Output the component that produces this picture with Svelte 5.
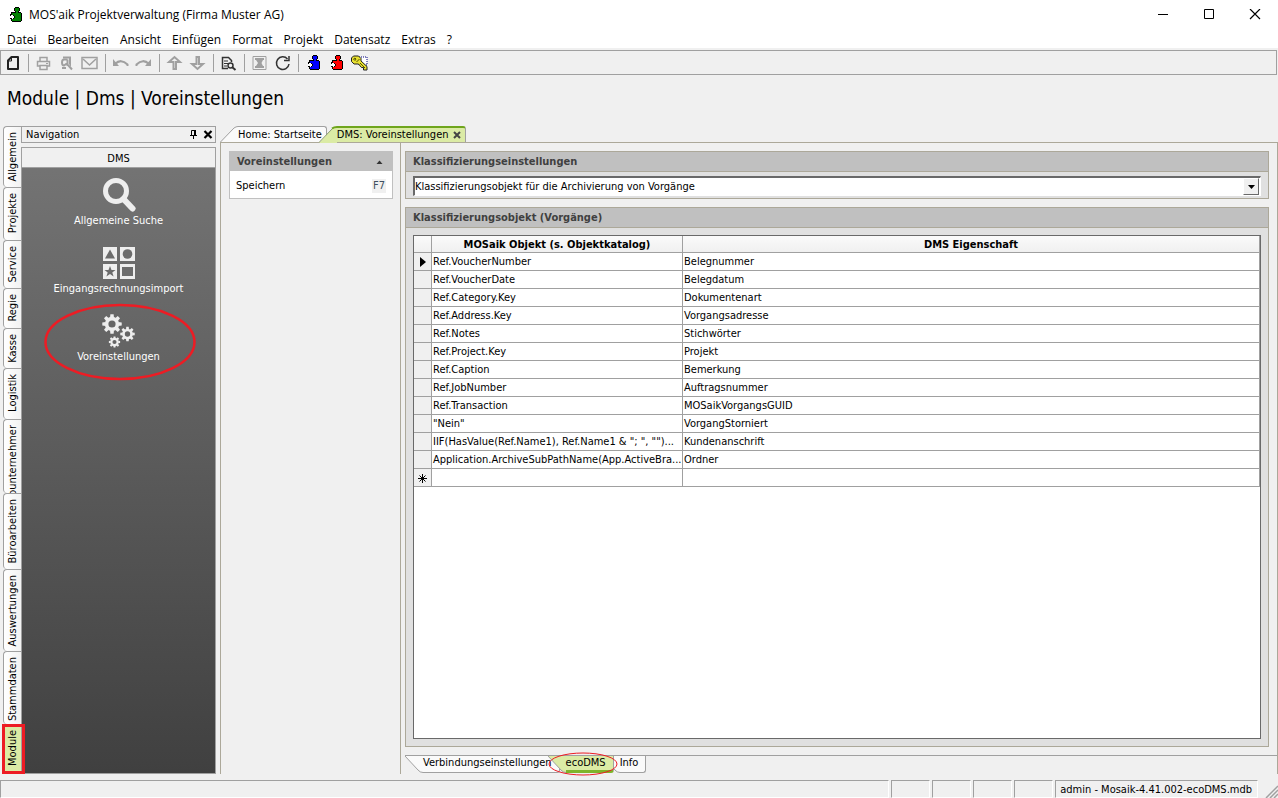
<script>
  const menu = ["Datei", "Bearbeiten", "Ansicht", "Einfügen", "Format", "Projekt", "Datensatz", "Extras", "?"];

  const tools = [
    ["Neu"],
    ["Drucken", "Seitenansicht", "Senden"],
    ["Rückgängig", "Wiederholen"],
    ["Nach oben", "Nach unten"],
    ["Suchen"],
    ["Excel", "Aktualisieren"],
    ["Modul blau", "Modul rot", "Schlüssel"],
  ];

  const sections = [
    "Allgemein", "Projekte", "Service", "Regie", "Kasse", "Logistik",
    "Subunternehmer", "Büroarbeiten", "Auswertungen", "Stammdaten", "Module",
  ];

  const rows = [
    ["Ref.VoucherNumber", "Belegnummer"],
    ["Ref.VoucherDate", "Belegdatum"],
    ["Ref.Category.Key", "Dokumentenart"],
    ["Ref.Address.Key", "Vorgangsadresse"],
    ["Ref.Notes", "Stichwörter"],
    ["Ref.Project.Key", "Projekt"],
    ["Ref.Caption", "Bemerkung"],
    ["Ref.JobNumber", "Auftragsnummer"],
    ["Ref.Transaction", "MOSaikVorgangsGUID"],
    ['"Nein"', "VorgangStorniert"],
    ['IIF(HasValue(Ref.Name1), Ref.Name1 & "; ", "")...', "Kundenanschrift"],
    ["Application.ArchiveSubPathName(App.ActiveBra...", "Ordner"],
  ];

  let section = $state("Module");
  let navItem = $state("Voreinstellungen");
  let page = $state("ecoDMS");
  let currentRow = $state(0);
</script>

{#snippet puzzle(color)}
  <svg width="14" height="16" viewBox="0 0 14 16" shape-rendering="crispEdges">
    <path d="M6 0H10V1H11V4H10V5H12V6H13V14H12V15H3V14H2V12H1V8H2V5H6V4H5V1H6Z" />
    <path d="M6 1H10V4H9V6H12V14H3V12H5V11H6V9H5V8H3V6H7V4H6Z" fill={color} />
    <path d="M1 8H4V9H5V11H4V12H1Z" fill="#fff" />
    <path d="M1 7H2V9H1ZM1 11H3V12H1Z" />
  </svg>
{/snippet}

{#snippet cog(x, y, r)}
  <g transform="translate({x} {y}) scale({r})">
    <circle r="6" fill="none" stroke="#eee" stroke-width="4" />
    {#each [0, 45, 90, 135, 180, 225, 270, 315] as a}
      <path d="M-2.2 -7L-1.8 -10.8H1.8L2.200 -7Z" fill="#eee" transform="rotate({a})" />
    {/each}
  </g>
{/snippet}

{#snippet toolIcon(name)}
  {#if name === "Modul blau"}
    {@render puzzle("#0000ff")}
  {:else if name === "Modul rot"}
    {@render puzzle("#ff0000")}
  {:else}
    <svg width="17" height="16" viewBox="0 0 17 16" fill="none">
      {#if name === "Neu"}
        <path d="M7.500 2H14V14H4V5.500Z" stroke="#222" stroke-width="2" stroke-linejoin="round" />
        <path d="M4 6H7.500V2" stroke="#222" />
      {:else if name === "Drucken"}
        <path d="M5 6V2.500H12V6M4.500 11H2.500V6.500H14.500V11H12.500M5 10.500H12V14.500H5Z" stroke="#a0a0a0" stroke-width="1.500" />
        <path d="M11 8.500H13" stroke="#a0a0a0" />
      {:else if name === "Seitenansicht"}
        <path d="M5 1.500H13V12L11 9V3.500H5Z" fill="#a0a0a0" />
        <path d="M9.500 4.500V11M9.500 4.500H6Q4 4.500 4 7.500T6 10.500L9.500 8" stroke="#a0a0a0" stroke-width="2" />
        <path d="M10 10L14 14.500M4 13H8" stroke="#a0a0a0" stroke-width="2" />
      {:else if name === "Senden"}
        <path d="M1 2.500H16V13.500H1Z" stroke="#a0a0a0" stroke-width="1.500" />
        <path d="M2 4L8.500 10L15 4" stroke="#a0a0a0" stroke-width="1.500" />
      {:else if name === "Rückgängig"}
        <path d="M3 9Q9 3 15.500 9.500V11" stroke="#a0a0a0" stroke-width="2" />
        <path d="M1 4V11H7Z" fill="#a0a0a0" />
      {:else if name === "Wiederholen"}
        <path d="M14 9Q8 3 1.500 9.500V11" stroke="#a0a0a0" stroke-width="2" />
        <path d="M16 4V11H10Z" fill="#a0a0a0" />
      {:else if name === "Nach oben"}
        <path d="M3 7L8.500 2L14 7H10V14H7.500V7Z" stroke="#a0a0a0" stroke-width="2" />
      {:else if name === "Nach unten"}
        <path d="M3 9L8.500 14L14 9H10V2H7.500V9Z" stroke="#a0a0a0" stroke-width="2" />
      {:else if name === "Suchen"}
        <path d="M8 13.500H2.500V2.500H8.500L11.500 5.500V7" stroke="#333" stroke-width="1.500" />
        <path d="M4 6H8M4 8.500H8M4 11H7" stroke="#333" />
        <circle cx="10.500" cy="10.500" r="2.500" stroke="#333" stroke-width="1.500" />
        <path d="M12 12L15.500 15" stroke="#333" stroke-width="2" />
      {:else if name === "Excel"}
        <path d="M2 1.500H15V14.500H2Z" stroke="#a0a0a0" />
        <path d="M4 3H13V5H12L10.500 8L12 11H13V13H4V11H5L7 8L5 5H4Z" fill="#a0a0a0" />
      {:else if name === "Aktualisieren"}
        <path d="M13.500 4A6.300 6.300 0 1 0 15 9" stroke="#333" stroke-width="1.500" />
        <path d="M15 1V5.500H10" stroke="#333" stroke-width="1.500" />
      {:else if name === "Schlüssel"}
        <path d="M8 2H16V10H8Z" fill="#fff" stroke="#000080" stroke-dasharray="1 1" />
        <path d="M2.500 1H7.500L10 3.500V6L16 11.500V15H12.500V12.500H10.500L7.500 9H3L.5 6.500V3Z" fill="#e8e030" stroke="#222" />
        <path d="M2.500 4L4 3L5 4L4 5.500ZM5.500 7L8.500 4M9 8L14 13" stroke="#555500" />
      {/if}
    </svg>
  {/if}
{/snippet}

<div class="window">
  <header class="titlebar">
    {@render puzzle("#008000")}
    <span class="title">MOS'aik Projektverwaltung (Firma Muster AG)</span>
    <button class="caption" aria-label="Minimieren">
      <svg width="12" height="12" viewBox="0 0 12 12"><path d="M1 5.500H11" stroke="#000" /></svg>
    </button>
    <button class="caption" aria-label="Maximieren">
      <svg width="12" height="12" viewBox="0 0 12 12"><path d="M1.500 .5H10.500V9.500H1.500Z" fill="none" stroke="#000" /></svg>
    </button>
    <button class="caption" aria-label="Schließen">
      <svg width="12" height="12" viewBox="0 0 12 12"><path d="M1 0L11 10M11 0L1 10" stroke="#000" stroke-width="1.200" /></svg>
    </button>
  </header>

  <nav class="menu">
    {#each menu as item}
      <button>{item}</button>
    {/each}
  </nav>

  <div class="toolbar">
    {#each tools as group}
      <div class="tool-group">
        {#each group as name}
          <button aria-label={name} title={name}>{@render toolIcon(name)}</button>
        {/each}
      </div>
    {/each}
  </div>

  <h1>Module | Dms | Voreinstellungen</h1>

  <div class="main">
    <div class="sections">
      {#each sections as name}
        <button class:active={section === name} onclick={() => (section = name)}>
          <span>{name}</span>
        </button>
      {/each}
    </div>

    <aside class="navigation">
      <div class="nav-title">
        <span>Navigation</span>
        <button aria-label="Anheften">
          <svg width="9" height="10" viewBox="0 0 9 10"><path d="M2.500 5V.5H6V5M1 5.500H8M4.500 6V9" fill="none" stroke="#000" /><path d="M5 0H7V5H5Z" /></svg>
        </button>
        <button aria-label="Navigation schließen">
          <svg width="10" height="10" viewBox="0 0 10 10"><path d="M1.500 1L8.500 8M8.500 1L1.500 8" stroke="#000" stroke-width="2.200" /></svg>
        </button>
      </div>
      <div class="nav-body">
        <h2>DMS</h2>
        <button class="nav-item" onclick={() => (navItem = "Allgemeine Suche")}>
          <svg width="34" height="34" viewBox="0 0 34 34" fill="none" stroke="#eee">
            <circle cx="14" cy="13" r="10.500" stroke-width="5" />
            <path d="M21.500 21L30.500 30.500" stroke-width="6" stroke-linecap="round" />
          </svg>
          Allgemeine Suche
        </button>
        <button class="nav-item" onclick={() => (navItem = "Eingangsrechnungsimport")}>
          <svg width="34" height="34" viewBox="0 0 34 34">
            <path d="M1 1H15V15H1ZM18 1H33V15H18ZM1 18H15V33H1ZM18 18H33V33H18Z" fill="#eee" />
            <path d="M8 3.500L13 12.500H3Z M20 21H31V30H20Z M8 20L9.500 24H13.500L10.300 26.500L11.600 30.500L8 28L4.400 30.500L5.700 26.500L2.500 24H6.500Z" fill="#6c6c6c" />
            <circle cx="25.500" cy="8" r="4.800" fill="#6c6c6c" />
          </svg>
          Eingangsrechnungsimport
        </button>
        <button class="nav-item" onclick={() => (navItem = "Voreinstellungen")}>
          <svg width="34" height="34" viewBox="0 0 34 34">
            {@render cog(10, 10, 0.9)}
            {@render cog(25.5, 20, 0.67)}
            {@render cog(12.5, 28, 0.52)}
          </svg>
          Voreinstellungen
          {#if navItem === "Voreinstellungen"}
            <svg class="ring nav-ring" width="152" height="78" viewBox="0 0 152 78">
              <ellipse cx="76" cy="39" rx="74.500" ry="37" />
            </svg>
          {/if}
        </button>
      </div>
    </aside>

    <section class="documents">
      <div class="doc-tabs">
        <button>
          <svg width="18" height="17" viewBox="0 0 18 17"><path d="M0 17L14 2Q16 .5 18 .5V17Z" fill="#fafafa" /><path d="M0 16.500L14 2Q16 .5 18 .5" fill="none" stroke="#a0a0a0" /></svg>
          <span>Home: Startseite</span>
        </button>
        <button class="active">
          <svg width="18" height="17" viewBox="0 0 18 17"><path d="M0 17L14 2Q16 .5 18 .5V17Z" fill="#dbeba5" /><path d="M0 16.500L14 2" stroke="#8a9a70" /><path d="M13 2.500Q15 1 18 1" fill="none" stroke="#6fa51c" stroke-width="2" /></svg>
          <span>
            DMS: Voreinstellungen
            <svg width="8" height="8" viewBox="0 0 8 8"><path d="M1 1L7 7M7 1L1 7" stroke="#444" stroke-width="2" /></svg>
          </span>
        </button>
      </div>

      <div class="doc-body">
        <div class="tasks">
          <div class="task-box">
            <h3>
              Voreinstellungen
              <svg width="7" height="4" viewBox="0 0 7 4"><path d="M.5 4L3.500 .5L6.500 4Z" fill="#333" /></svg>
            </h3>
            <button>Speichern <kbd>F7</kbd></button>
          </div>
        </div>

        <div class="content">
          <div class="groups">
            <div class="group">
              <h3><label for="klassifizierung">Klassifizierungseinstellungen</label></h3>
              <div class="select-wrap">
                <select id="klassifizierung">
                  <option>Klassifizierungsobjekt für die Archivierung von Vorgänge</option>
                </select>
                <span class="arrow">
                  <svg width="7" height="4" viewBox="0 0 7 4"><path d="M0 0H7L3.500 4Z" /></svg>
                </span>
              </div>
            </div>

            <div class="group fill">
              <h3>Klassifizierungsobjekt (Vorgänge)</h3>
              <div class="grid">
                <table>
                  <colgroup><col class="mark" /><col class="object" /><col /></colgroup>
                  <thead>
                    <tr><th></th><th>MOSaik Objekt (s. Objektkatalog)</th><th>DMS Eigenschaft</th></tr>
                  </thead>
                  <tbody>
                    {#each rows as [object, property], i}
                      <tr onclick={() => (currentRow = i)}>
                        <td>
                          {#if i === currentRow}
                            <svg width="6" height="10" viewBox="0 0 6 10"><path d="M0 0L6 5L0 10Z" /></svg>
                          {/if}
                        </td>
                        <td>{object}</td>
                        <td>{property}</td>
                      </tr>
                    {/each}
                    <tr>
                      <td>
                        <svg width="9" height="9" viewBox="0 0 9 9"><path d="M4.500 0V9M0 4.500H9M1.500 1.500L7.500 7.500M7.500 1.500L1.500 7.500" stroke="#000" /></svg>
                      </td>
                      <td></td>
                      <td></td>
                    </tr>
                  </tbody>
                </table>
              </div>
            </div>
          </div>

          <div class="page-tabs">
            {#each ["Verbindungseinstellungen", "ecoDMS", "Info"] as name}
              <button class:active={page === name} onclick={() => (page = name)}>
                <svg width="18" height="17" viewBox="0 0 18 17">
                  <path class="face" d="M0 0L13 14Q15 16.500 18 16.500V0Z" />
                  <path d="M0 0L13 14Q15 16.500 18 16.500" fill="none" stroke="#a0a0a0" />
                </svg>
                <span>{name}</span>
                {#if page === name && name === "ecoDMS"}
                  <svg class="ring page-ring" width="70" height="24" viewBox="0 0 70 24">
                    <ellipse cx="35" cy="12" rx="34" ry="11" />
                  </svg>
                {/if}
              </button>
            {/each}
          </div>
        </div>
      </div>
    </section>
  </div>

  <footer class="status">
    <span class="message"></span>
    <span></span>
    <span></span>
    <span></span>
    <span></span>
    <span class="database">admin - Mosaik-4.41.002-ecoDMS.mdb</span>
    <svg width="14" height="14" viewBox="0 0 14 14"><path d="M2 14L14 2M6 14L14 6M10 14L14 10" stroke="#a0a0a0" stroke-width="1.500" /></svg>
  </footer>
</div>

<style>
  :global(body) {
    margin: 0;
    background: #f0f0f0;
  }
  .window {
    display: flex;
    flex-direction: column;
    min-height: 100vh;
    overflow: hidden;
    background: #f0f0f0;
    color: #000;
    font-family: "DejaVu Sans Condensed", "DejaVu Sans", sans-serif;
    font-size: 11px;
    line-height: 14px;
  }
  button {
    margin: 0;
    padding: 0;
    border: none;
    background: none;
    color: inherit;
    font: inherit;
    white-space: nowrap;
  }
  svg {
    display: block;
    flex-shrink: 0;
  }
  h1,
  h2,
  h3 {
    margin: 0;
    font: inherit;
  }

  .titlebar,
  .menu {
    display: flex;
    align-items: center;
    background: #fff;
    font-family: "Open Sans", sans-serif;
    font-size: 12px;
    line-height: 16px;
  }
  .titlebar {
    height: 30px;
    padding-left: 9px;
  }
  .title {
    flex: 1;
    padding-left: 6px;
  }
  .caption {
    display: flex;
    justify-content: center;
    width: 46px;
  }
  .menu {
    height: 17px;
    gap: 11px;
    padding: 1px 7px 0;
  }
  .toolbar {
    display: flex;
    height: 23px;
    margin: 2px 1px 0 0;
    border: 1px solid #a0a0a0;
  }
  .tool-group {
    display: flex;
    align-items: center;
  }
  .tool-group + .tool-group::before {
    content: "";
    width: 1px;
    height: 18px;
    margin: 0 3px 0 4px;
    background: #a0a0a0;
  }
  .tool-group button {
    display: flex;
    justify-content: center;
    width: 23px;
  }
  h1 {
    padding: 11px 7px 16px;
    font-size: 19px;
    line-height: 24px;
  }

  .main {
    display: flex;
    flex: 1;
  }
  .sections {
    display: grid;
    grid-template-rows: 61fr 53fr 48fr 40fr 40fr 51fr 74fr 76fr 82fr 73fr 50fr;
    contain: size;
    width: 18px;
    margin-left: 3px;
  }
  .sections button {
    position: relative;
    display: flex;
    align-items: flex-start;
    justify-content: center;
    min-height: 0;
    padding: 5px 0 0 1px;
    overflow: hidden;
    border: 1px solid #a0a0a0;
    border-width: 1px 0 0 1px;
    border-radius: 4px 0 0 4px;
    background: linear-gradient(90deg, #fff, #f2f2f2);
  }
  .sections span {
    writing-mode: vertical-rl;
    transform: rotate(180deg);
  }
  .sections .active {
    overflow: visible;
    background: #dbeba5;
  }
  .sections .active::after {
    content: "";
    position: absolute;
    z-index: 1;
    inset: -1px -4px 0 -2px;
    border: 3px solid #ed1c24;
  }

  .navigation {
    display: flex;
    flex-direction: column;
    gap: 4px;
    width: 195px;
  }
  .nav-title {
    display: flex;
    align-items: center;
    gap: 5px;
    height: 15px;
    padding: 0 2px 0 4px;
    border: 1px solid #a0a0a0;
  }
  .nav-title span {
    flex: 1;
  }
  .nav-body {
    flex: 1;
    border: 1px solid #a0a0a0;
    background: linear-gradient(#757575, #404040);
  }
  h2 {
    height: 19px;
    margin-bottom: 10px;
    border-bottom: 1px solid #a0a0a0;
    background: #f0f0f0;
    line-height: 21px;
    text-align: center;
  }
  .nav-item {
    position: relative;
    display: flex;
    flex-direction: column;
    align-items: center;
    gap: 2px;
    width: 100%;
    height: 68px;
    color: #fff;
  }
  .ring {
    position: absolute;
    fill: none;
    stroke: #ed1c24;
    pointer-events: none;
  }
  .nav-ring {
    top: -11px;
    left: 22px;
    stroke-width: 2.5px;
  }

  .documents {
    display: flex;
    flex: 1;
    flex-direction: column;
    min-width: 0;
    margin-left: 4px;
  }
  .doc-tabs,
  .doc-tabs button,
  .page-tabs,
  .page-tabs button {
    display: flex;
  }
  .doc-tabs {
    height: 16px;
  }
  .doc-tabs span {
    display: flex;
    align-items: center;
    gap: 4px;
    height: 14px;
    padding: 1px 4px 0 0;
    border: 1px solid #a0a0a0;
    border-width: 1px 1px 0 0;
    border-radius: 0 3px 0 0;
    background: #fafafa;
  }
  .doc-tabs .active {
    position: relative;
    margin-left: -8px;
  }
  .doc-tabs .active span {
    height: 14px;
    padding-top: 0;
    border-top: 2px solid #6fa51c;
    background: #dbeba5;
  }
  .doc-body {
    display: flex;
    flex: 1;
    border: 1px solid #aca899;
    border-bottom: none;
  }
  .tasks {
    width: 180px;
    padding: 8px 7px 8px 8px;
    box-sizing: border-box;
    border-right: 1px solid #aca899;
  }
  .task-box {
    border: 1px solid #c0c0c0;
    background: #fff;
  }
  h3 {
    display: flex;
    align-items: center;
    justify-content: space-between;
    height: 19px;
    padding: 0 9px 0 7px;
    background: #c0c0c0;
    color: #404040;
    font-weight: bold;
  }
  .task-box button {
    display: flex;
    align-items: center;
    justify-content: space-between;
    width: 100%;
    height: 27px;
    padding: 2px 6px 0;
  }
  kbd {
    padding: 0 1px;
    background: #f0f0f0;
    color: #405060;
    font: inherit;
  }

  .content {
    display: flex;
    flex: 1;
    flex-direction: column;
    min-width: 0;
    padding-left: 4px;
  }
  .groups {
    display: flex;
    flex: 1;
    flex-direction: column;
    gap: 8px;
    padding: 8px 8px 8px 0;
  }
  .group {
    border: 1px solid #aca899;
    background: #e0e0e0;
  }
  .group h3 {
    border-bottom: 1px solid #aca899;
  }
  .fill {
    display: flex;
    flex: 1;
    flex-direction: column;
  }
  .select-wrap {
    position: relative;
    display: flex;
    height: 17px;
    margin: 4px 7px 2px;
    border: 1px solid #fff;
    border-top: 2px solid #696969;
    border-left: 2px solid #696969;
    background: #fff;
  }
  select {
    flex: 1;
    padding: 0;
    border: none;
    appearance: none;
    background: none;
    color: #000;
    font: inherit;
  }
  .arrow {
    position: absolute;
    top: 0;
    right: 1px;
    bottom: 0;
    display: flex;
    align-items: center;
    justify-content: center;
    width: 14px;
    border: 1px solid #fff;
    border-right-color: #696969;
    border-bottom-color: #696969;
    background: #f0f0f0;
    pointer-events: none;
  }
  .grid {
    flex: 1;
    margin: 7px;
    border: 1px solid #696969;
    background: #fff;
  }
  table {
    width: 100%;
    border-collapse: separate;
    border-spacing: 0;
    table-layout: fixed;
  }
  .mark {
    width: 18px;
  }
  .object {
    width: 251px;
  }
  th,
  td {
    height: 16px;
    padding: 1px 1px 0;
    overflow: hidden;
    border: 1px solid #a0a0a0;
    border-width: 0 1px 1px 0;
    line-height: 16px;
    white-space: nowrap;
  }
  th {
    height: 15px;
    background: linear-gradient(#fafafa, #f0f0f0);
    line-height: 15px;
  }
  td:first-child {
    background: #f0f0f0;
  }
  td svg {
    margin: 0 auto;
  }

  .page-tabs {
    height: 18px;
    border-top: 1px solid #a0a0a0;
  }
  .page-tabs button {
    position: relative;
    height: 17px;
  }
  .page-tabs button + button {
    margin-left: -12px;
  }
  .page-tabs .active {
    z-index: 1;
  }
  .page-tabs .face {
    fill: #fafafa;
  }
  .page-tabs span {
    height: 16px;
    padding-right: 7px;
    border: 1px solid #a0a0a0;
    border-width: 0 1px 1px 0;
    border-radius: 0 0 3px 0;
    background: #fafafa;
  }
  .page-tabs .active .face {
    fill: #dbeba5;
  }
  .page-tabs .active span {
    height: 14px;
    border-bottom: 3px solid #7fb42a;
    background: #dbeba5;
  }
  .page-ring {
    top: -4px;
    left: 0;
  }

  .status {
    display: flex;
    gap: 2px;
    height: 18px;
    margin-top: 6px;
  }
  .status span {
    width: 37px;
    border: 1px solid #fff;
    border-top-color: #a0a0a0;
    border-left-color: #a0a0a0;
    line-height: 17px;
  }
  .status .message {
    flex: 1;
  }
  .status .database {
    width: auto;
    padding: 0 5px 0 4px;
    white-space: nowrap;
  }
  .status svg {
    align-self: flex-end;
    margin-left: 4px;
  }
</style>
